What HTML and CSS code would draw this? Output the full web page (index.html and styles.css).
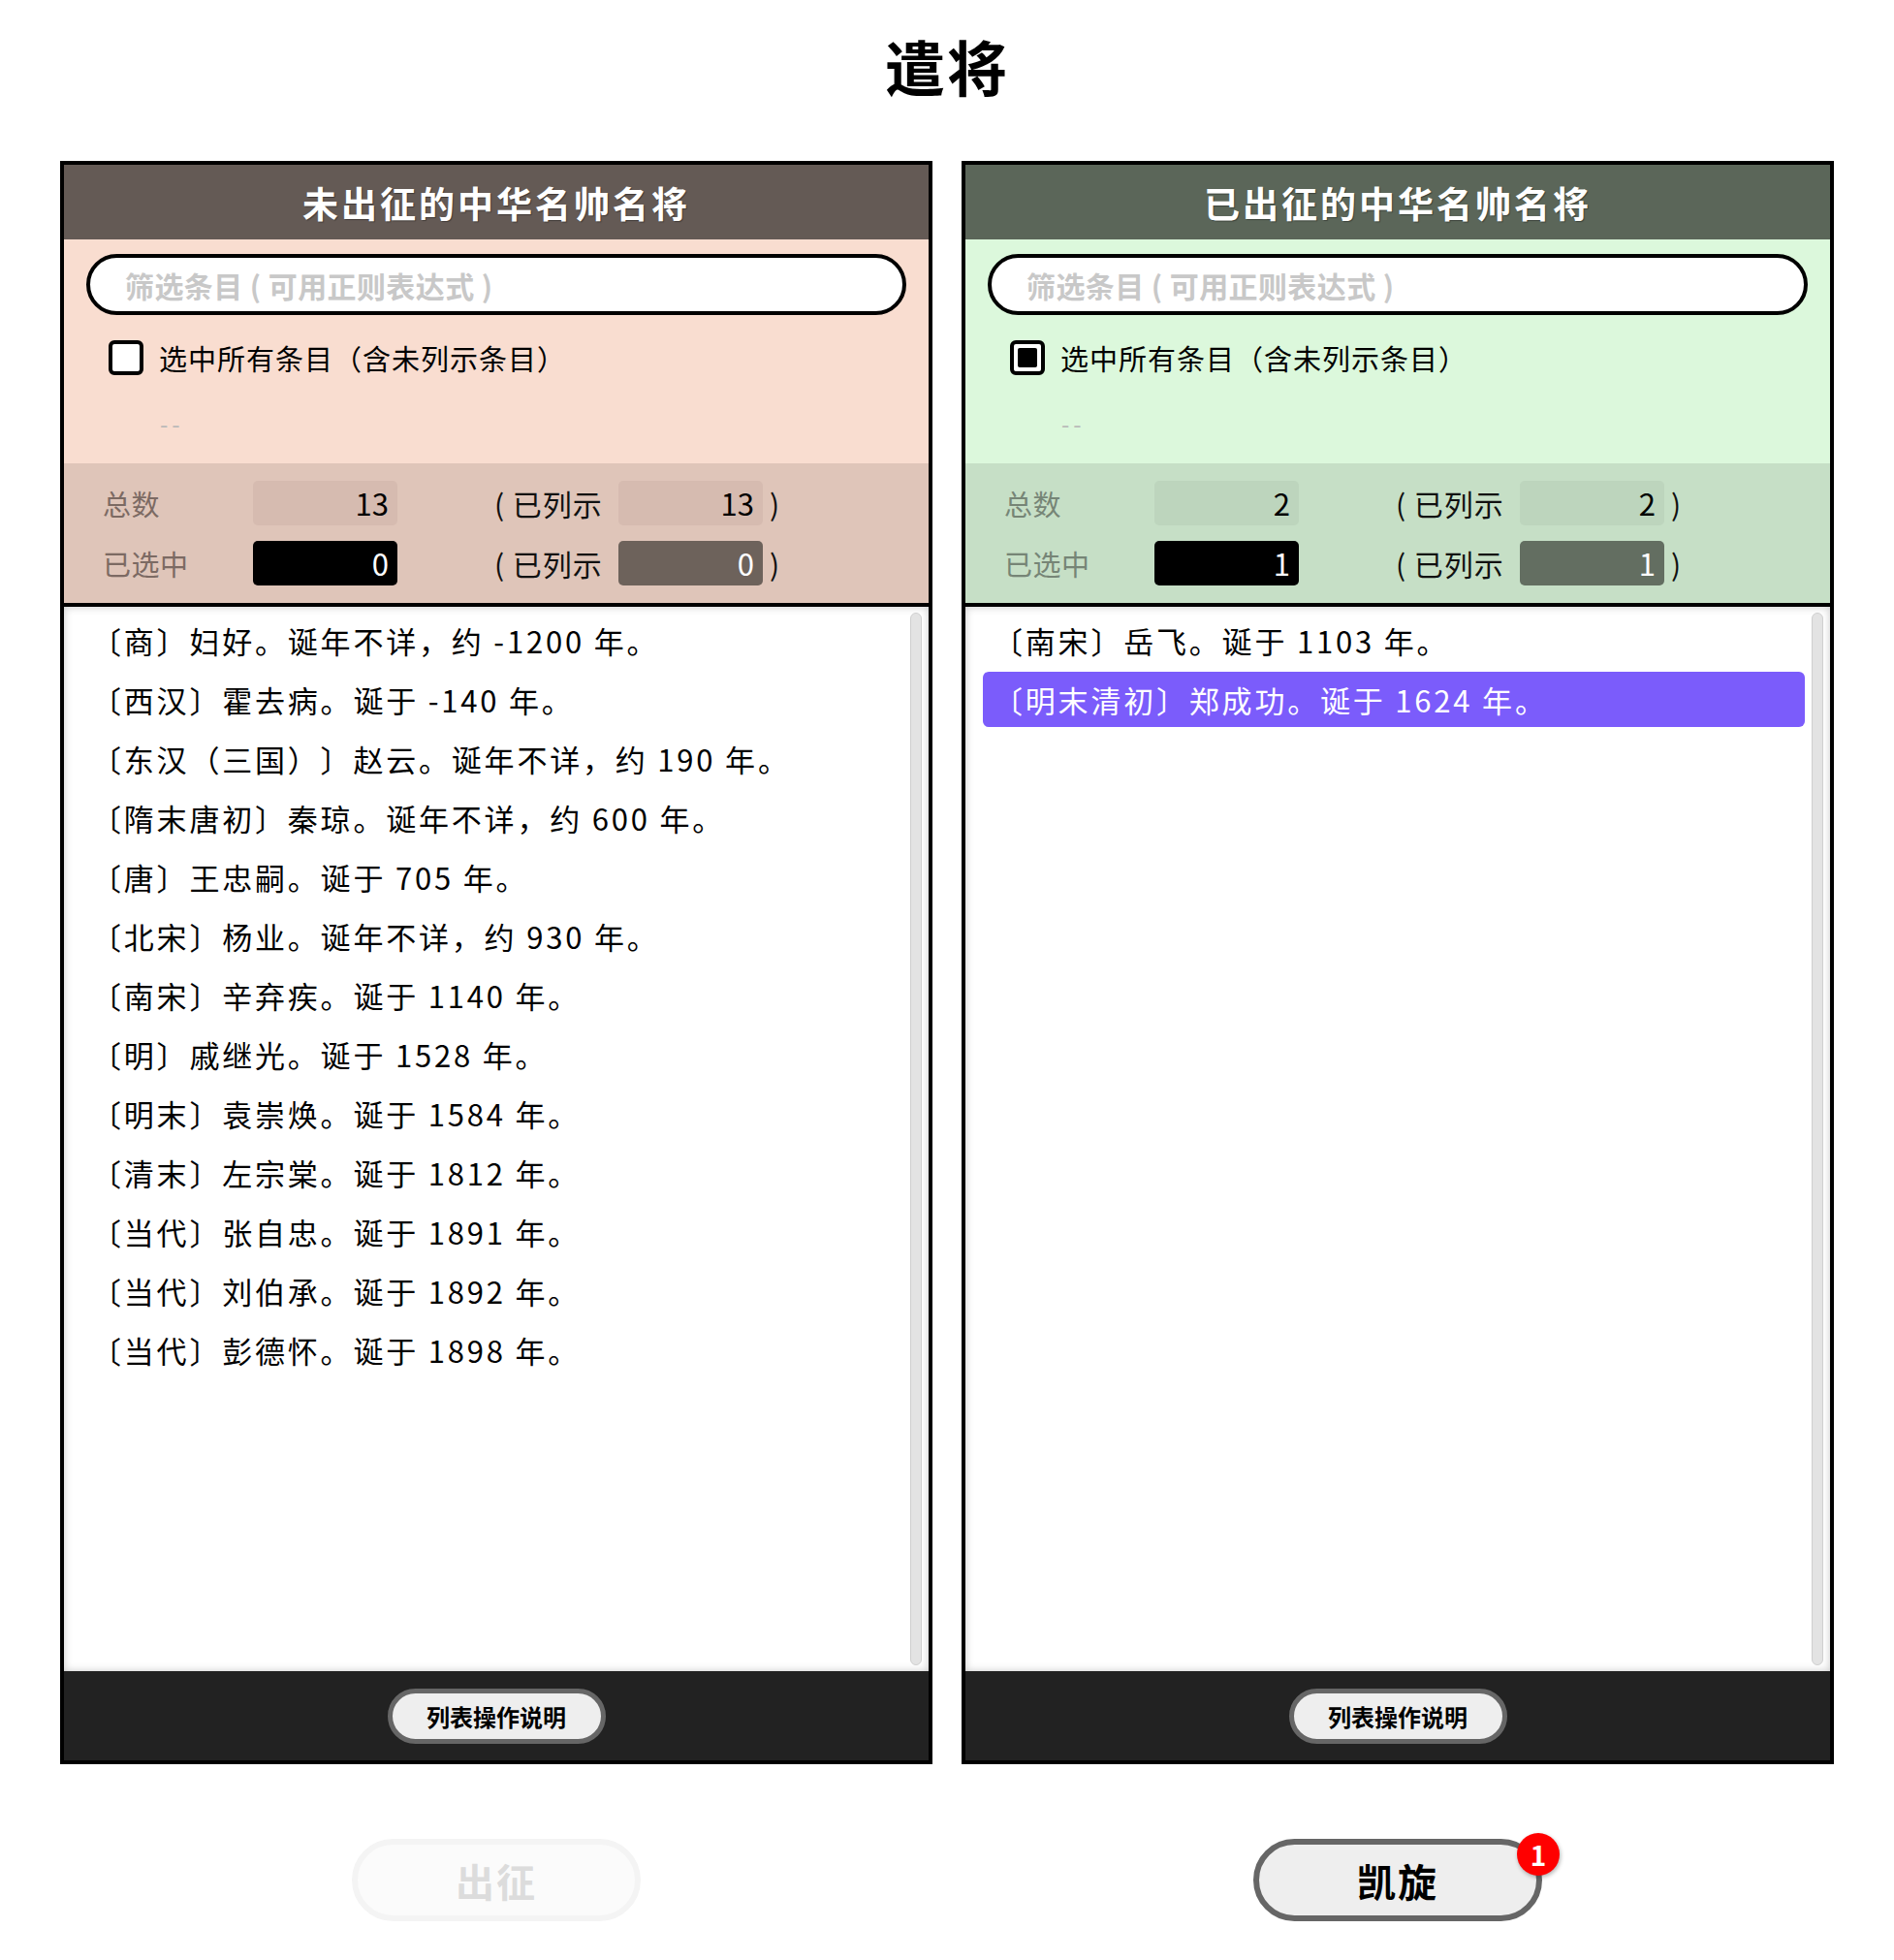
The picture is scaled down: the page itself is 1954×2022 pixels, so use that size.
FILE: index.html
```html
<!DOCTYPE html>
<html lang="zh-CN">
<head>
<meta charset="utf-8">
<title>遣将</title>
<link rel="stylesheet" href="styles.css">
</head>
<body>
<h1 class="page-title">遣将</h1>
<main class="board">
  <section class="panel panel-out">
    <header class="panel-head">未出征的中华名帅名将</header>
    <div class="filter">
      <input class="filter-input" type="text" placeholder="筛选条目 ( 可用正则表达式 )">
      <label class="check-row"><span class="check"></span><span>选中所有条目（含未列示条目）</span></label>
      <div class="dash">--</div>
    </div>
    <div class="stats">
      <div class="stat-row">
        <span class="stat-label">总数</span>
        <span class="val val-light">13</span>
        <span class="stat-label2">( 已列示</span>
        <span class="val val-light">13</span>
        <span class="paren">)</span>
      </div>
      <div class="stat-row">
        <span class="stat-label">已选中</span>
        <span class="val val-black">0</span>
        <span class="stat-label2">( 已列示</span>
        <span class="val val-dark">0</span>
        <span class="paren">)</span>
      </div>
    </div>
    <div class="list-wrap">
      <ul class="list">
        <li class="item">〔商〕妇好。诞年不详，约 -1200 年。</li>
        <li class="item">〔西汉〕霍去病。诞于 -140 年。</li>
        <li class="item">〔东汉（三国）〕赵云。诞年不详，约 190 年。</li>
        <li class="item">〔隋末唐初〕秦琼。诞年不详，约 600 年。</li>
        <li class="item">〔唐〕王忠嗣。诞于 705 年。</li>
        <li class="item">〔北宋〕杨业。诞年不详，约 930 年。</li>
        <li class="item">〔南宋〕辛弃疾。诞于 1140 年。</li>
        <li class="item">〔明〕戚继光。诞于 1528 年。</li>
        <li class="item">〔明末〕袁崇焕。诞于 1584 年。</li>
        <li class="item">〔清末〕左宗棠。诞于 1812 年。</li>
        <li class="item">〔当代〕张自忠。诞于 1891 年。</li>
        <li class="item">〔当代〕刘伯承。诞于 1892 年。</li>
        <li class="item">〔当代〕彭德怀。诞于 1898 年。</li>
      </ul>
      <div class="scrollbar"></div>
    </div>
    <footer class="panel-foot"><button class="help-btn">列表操作说明</button></footer>
  </section>

  <section class="panel panel-in">
    <header class="panel-head">已出征的中华名帅名将</header>
    <div class="filter">
      <input class="filter-input" type="text" placeholder="筛选条目 ( 可用正则表达式 )">
      <label class="check-row"><span class="check check-partial"></span><span>选中所有条目（含未列示条目）</span></label>
      <div class="dash">--</div>
    </div>
    <div class="stats">
      <div class="stat-row">
        <span class="stat-label">总数</span>
        <span class="val val-light">2</span>
        <span class="stat-label2">( 已列示</span>
        <span class="val val-light">2</span>
        <span class="paren">)</span>
      </div>
      <div class="stat-row">
        <span class="stat-label">已选中</span>
        <span class="val val-black">1</span>
        <span class="stat-label2">( 已列示</span>
        <span class="val val-dark">1</span>
        <span class="paren">)</span>
      </div>
    </div>
    <div class="list-wrap">
      <ul class="list">
        <li class="item">〔南宋〕岳飞。诞于 1103 年。</li>
        <li class="item item-selected">〔明末清初〕郑成功。诞于 1624 年。</li>
      </ul>
      <div class="scrollbar"></div>
    </div>
    <footer class="panel-foot"><button class="help-btn">列表操作说明</button></footer>
  </section>

  <div class="action-cell"><button class="action-btn action-disabled">出征</button></div>
  <div class="action-cell"><button class="action-btn">凯旋<span class="badge">1</span></button></div>
</main>
</body>
</html>
```
FILE: styles.css
```css
* { box-sizing: border-box; }
html, body { margin: 0; padding: 0; background: #fff; }
body {
  font-family: "Noto Sans CJK SC", "Noto Sans", sans-serif;
  color: #000;
  text-spacing-trim: space-all;
}
.page-title {
  margin: 0;
  padding-top: 28px;
  height: 166px;
  text-align: center;
  font-size: 62px;
  line-height: 80px;
  font-weight: 700;
  letter-spacing: 2px;
}
.board {
  display: grid;
  grid-template-columns: 900px 900px;
  column-gap: 30px;
  justify-content: center;
}
.panel {
  border: 4px solid #000;
  height: 1654px;
  display: flex;
  flex-direction: column;
}
.panel-head {
  height: 77px;
  flex: none;
  display: flex;
  align-items: center;
  justify-content: center;
  color: #fff;
  font-size: 37px;
  font-weight: 700;
  letter-spacing: 3px;
  text-shadow: 1px 1px 1px rgba(0,0,0,0.35);
}
.panel-out .panel-head { background: #645a55; }
.panel-in .panel-head { background: #5b6659; }
.filter {
  height: 231px;
  flex: none;
  padding: 15px 23px 0;
}
.panel-out .filter { background: #f9ddd0; }
.panel-in .filter { background: #dcf8dc; }
.filter-input {
  display: block;
  width: 100%;
  height: 63px;
  border: 4px solid #000;
  border-radius: 32px;
  background: #fff;
  padding: 0 36px;
  font-family: inherit;
  font-size: 30px;
  font-weight: 700;
  outline: none;
}
.filter-input::placeholder { color: #c8c8c8; letter-spacing: 0.4px; }
.check-row {
  display: flex;
  align-items: center;
  gap: 16px;
  margin: 26px 0 0 23px;
  font-size: 29px;
  height: 36px;
  letter-spacing: 1px;
}
.check {
  width: 36px;
  height: 36px;
  border: 4px solid #000;
  border-radius: 6px;
  background: #fff;
  flex: none;
  padding: 4px;
}
.check-partial::after {
  content: "";
  display: block;
  width: 100%;
  height: 100%;
  background: #000;
  border-radius: 2px;
}
.dash {
  margin: 30px 0 0 76px;
  color: #b8b8b8;
  font-size: 24px;
  line-height: 40px;
  letter-spacing: 4px;
}
.stats {
  height: 148px;
  flex: none;
  padding: 18px 0 0 40px;
  border-bottom: 4px solid #000;
  display: flex;
  flex-direction: column;
  gap: 16px;
}
.panel-out .stats { background: #dfc5b9; color: #7c6a63; }
.panel-in .stats { background: #c6dfc6; color: #768576; }
.stat-row {
  display: flex;
  align-items: center;
  height: 46px;
  font-size: 29px;
}
.stat-label { width: 155px; letter-spacing: 0.5px; }
.stat-label2 { width: 228px; padding-left: 100px; color: #111; letter-spacing: 1px; font-size: 30px; }
.paren { color: #111; margin-left: 7px; font-size: 30px; }
.val {
  width: 149px;
  height: 46px;
  border-radius: 5px;
  text-align: right;
  padding-right: 9px;
  font-size: 31px;
  line-height: 46px;
}
.panel-out .val-light { background: #d6bbb0; color: #000; }
.panel-in .val-light { background: #bdd5bd; color: #000; }
.val-black { background: #000; color: #fff; }
.panel-out .val-dark { background: #6d625b; color: #fff; }
.panel-in .val-dark { background: #636e61; color: #fff; }
.list-wrap {
  flex: 1;
  display: flex;
  background: #fff;
  box-shadow: inset 0 0 8px rgba(0,0,0,0.22);
  padding: 6px 7px 6px 18px;
}
.list {
  list-style: none;
  margin: 0;
  padding: 0;
  flex: 1;
  display: flex;
  flex-direction: column;
  gap: 4px;
}
.item {
  height: 57px;
  line-height: 57px;
  padding-left: 10px;
  margin-right: 7px;
  font-size: 31px;
  letter-spacing: 2.8px;
  border-radius: 6px;
  white-space: nowrap;
}
.item-selected { background: #7b5cfb; color: #fff; }
.scrollbar {
  width: 12px;
  flex: none;
  background: #e3e3e3;
  border: 1px solid #cfcfcf;
  border-radius: 6px;
}
.panel-foot {
  height: 92px;
  flex: none;
  background: #222;
  display: flex;
  align-items: center;
  justify-content: center;
}
.help-btn {
  width: 225px;
  height: 57px;
  border: 5px solid #666;
  border-radius: 29px;
  background: #eee;
  font-family: inherit;
  font-size: 24px;
  font-weight: 700;
  color: #000;
  padding: 0;
}
.action-cell {
  display: flex;
  justify-content: center;
  padding-top: 77px;
}
.action-btn {
  position: relative;
  width: 298px;
  height: 85px;
  border: 6px solid #666;
  border-radius: 43px;
  background: #eee;
  font-family: inherit;
  font-size: 40px;
  font-weight: 700;
  color: #000;
  letter-spacing: 2px;
  padding: 0;
}
.action-disabled {
  background: #fbfbfb;
  border-color: #f4f4f4;
  color: #dcdcdc;
}
.badge {
  position: absolute;
  top: -12px;
  right: -24px;
  width: 44px;
  height: 44px;
  border-radius: 50%;
  background: #f00;
  color: #fff;
  font-size: 28px;
  font-weight: 700;
  line-height: 44px;
  text-align: center;
  letter-spacing: 0;
  box-shadow: 1px 2px 4px rgba(0,0,0,0.3);
}
```
